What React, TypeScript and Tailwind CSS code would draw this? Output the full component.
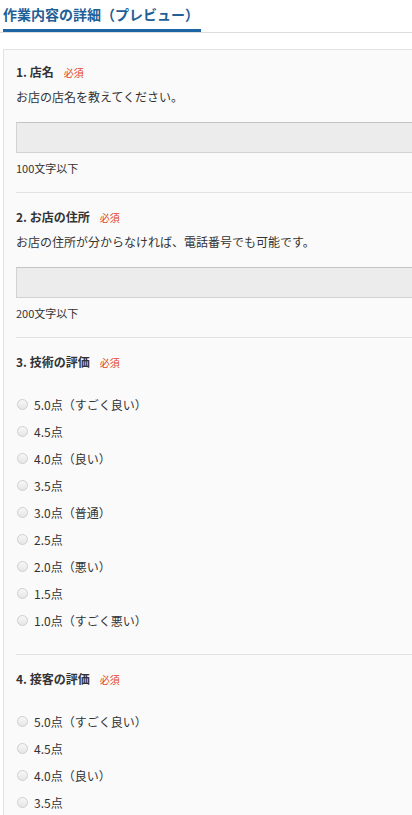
import React from 'react';

const font = { fontFamily: '"Noto Sans CJK JP", "Noto Sans", sans-serif' };

const ratings = [
  '5.0点（すごく良い）',
  '4.5点',
  '4.0点（良い）',
  '3.5点',
  '3.0点（普通）',
  '2.5点',
  '2.0点（悪い）',
  '1.5点',
  '1.0点（すごく悪い）',
];

function Label({ text }: { text: string }) {
  return (
    <div className="h-[20px] flex items-center">
      <span className="text-[12px] font-bold text-[#333]">{text}</span>
      <span className="ml-[10px] text-[10px] text-[#e0452a]">必須</span>
    </div>
  );
}

function TextQuestion({ label, desc, limit, first }: { label: string; desc: string; limit: string; first?: boolean }) {
  return (
    <div className={`${first ? 'pt-[12px]' : 'pt-[14px]'} pb-[15px] border-b border-[#e2e2e2]`}>
      <Label text={label} />
      <p className="mt-[5px] h-[20px] leading-[20px] text-[12px] text-[#333]">{desc}</p>
      <div className="mt-[15px] h-[31px] bg-[#ececec] border border-[#d2d2d2] border-t-[#c4c4c4]" />
      <p className="mt-[6px] h-[18px] leading-[18px] text-[11px] text-[#333]">{limit}</p>
    </div>
  );
}

function RadioQuestion({ label, last }: { label: string; last?: boolean }) {
  return (
    <div className={`pt-[14px] ${last ? '' : 'pb-[20px] border-b border-[#e2e2e2]'}`}>
      <Label text={label} />
      <ul className="mt-[19px]">
        {ratings.map((r) => (
          <li key={r} className="h-[27px] flex items-center">
            <span className="ml-[1px] w-[11px] h-[11px] rounded-full border border-[#cfcfcf] bg-gradient-to-b from-[#f7f7f7] to-[#e6e6e6]" />
            <span className="ml-[6px] text-[12px] text-[#333]">{r}</span>
          </li>
        ))}
      </ul>
    </div>
  );
}

export default function App() {
  return (
    <div className="w-[412px] h-[815px] overflow-hidden bg-white" style={font}>
      <div className="border-b border-[#dcdcdc]">
        <div className="ml-[3px] w-[198px] h-[32px] border-b-[3px] border-[#1d66a3]">
          <h1 className="h-[29px] leading-[29px] text-[14px] font-bold text-[#1f5f97]">作業内容の詳細（プレビュー）</h1>
        </div>
      </div>
      <div className="mt-[16px] ml-[3px] w-[460px] border-l border-t border-[#e2e2e2] bg-[#fafafa] pl-[12px]">
        <TextQuestion first label="1. 店名" desc="お店の店名を教えてください。" limit="100文字以下" />
        <TextQuestion label="2. お店の住所" desc="お店の住所が分からなければ、電話番号でも可能です。" limit="200文字以下" />
        <RadioQuestion label="3. 技術の評価" />
        <RadioQuestion last label="4. 接客の評価" />
      </div>
    </div>
  );
}
